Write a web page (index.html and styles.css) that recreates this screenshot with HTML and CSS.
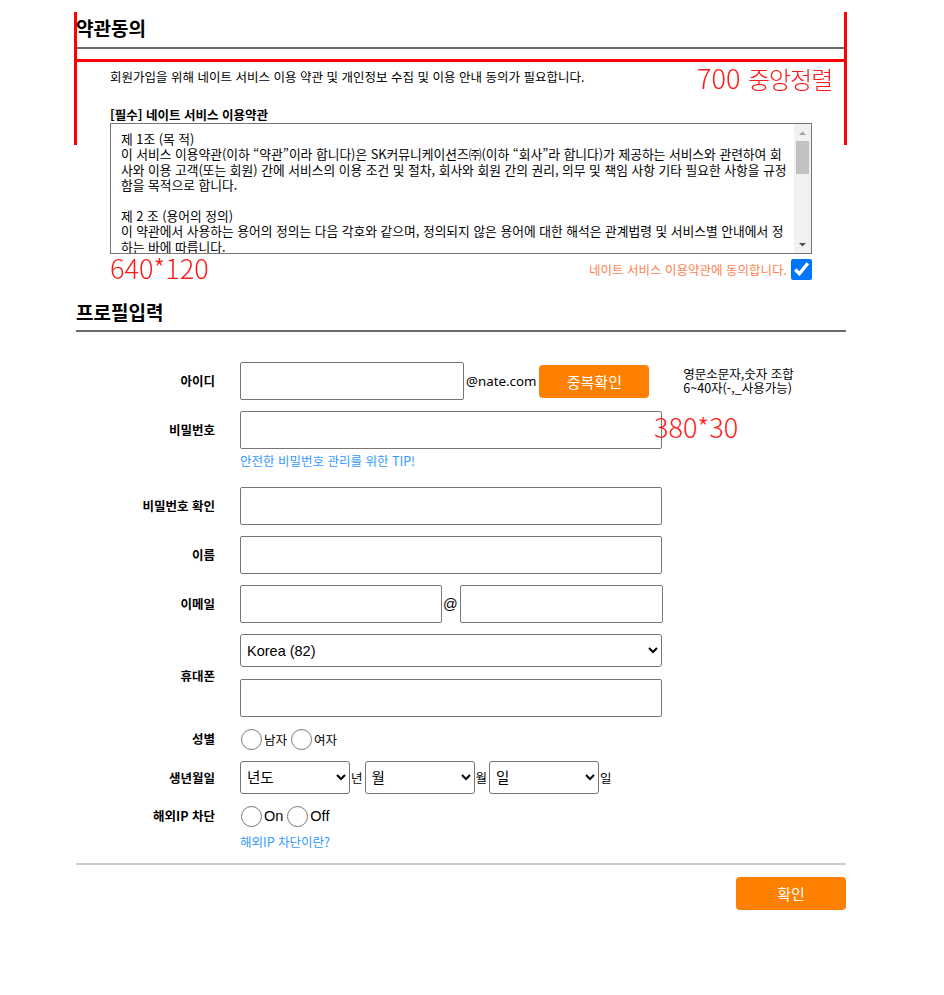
FILE: index.html
```html
<!DOCTYPE html>
<html lang="ko">
<head>
<meta charset="utf-8">
<title>회원가입</title>
<link rel="stylesheet" href="styles.css">
</head>
<body>
<div class="wrap">
  <section class="terms">
    <h2 class="sec-title">약관동의</h2>
    <p class="intro">회원가입을 위해 네이트 서비스 이용 약관 및 개인정보 수집 및 이용 안내 동의가 필요합니다.</p>
    <h3 class="req-title">[필수] 네이트 서비스 이용약관</h3>
    <div class="terms-area">
      <textarea class="terms-box" readonly>제 1조 (목 적)
이 서비스 이용약관(이하 “약관”이라 합니다)은 SK커뮤니케이션즈㈜(이하 “회사”라 합니다)가 제공하는 서비스와 관련하여 회사와 이용 고객(또는 회원) 간에 서비스의 이용 조건 및 절차, 회사와 회원 간의 권리, 의무 및 책임 사항 기타 필요한 사항을 규정함을 목적으로 합니다.

제 2 조 (용어의 정의)
이 약관에서 사용하는 용어의 정의는 다음 각호와 같으며, 정의되지 않은 용어에 대한 해석은 관계법령 및 서비스별 안내에서 정하는 바에 따릅니다.
1. “서비스”라 함은 구현되는 단말기(PC, 휴대형단말기 등의 각종 유무선 장치를 포함)와 상관없이 회원이 이용할 수 있는 네이트 및 관련 제반 서비스를 의미합니다.
2. “회원”이라 함은 회사의 서비스에 접속하여 이 약관에 따라 회사와 이용계약을 체결하고 회사가 제공하는 서비스를 이용하는 고객을 말합니다.
3. “아이디(ID)”라 함은 회원의 식별과 서비스 이용을 위하여 회원이 정하고 회사가 승인하는 문자와 숫자의 조합을 의미합니다.
4. “비밀번호”라 함은 회원이 부여 받은 아이디와 일치되는 회원임을 확인하고 비밀보호를 위해 회원 자신이 정한 문자 또는 숫자의 조합을 의미합니다.

제 3 조 (약관의 게시와 개정)
1. 회사는 이 약관의 내용을 회원이 쉽게 알 수 있도록 서비스 초기 화면에 게시합니다.
2. 회사는 관련법을 위배하지 않는 범위에서 이 약관을 개정할 수 있습니다.
3. 회사가 약관을 개정할 경우에는 적용일자 및 개정사유를 명시하여 현행약관과 함께 개정약관의 적용일자 7일 전부터 적용일자 전일까지 공지합니다.

제 4 조 (이용계약 체결)
1. 이용계약은 회원이 되고자 하는 자가 약관의 내용에 대하여 동의를 한 다음 회원가입신청을 하고 회사가 이러한 신청에 대하여 승낙함으로써 체결됩니다.
2. 회사는 가입신청자의 신청에 대하여 서비스 이용을 승낙함을 원칙으로 합니다.</textarea>
      <div class="fake-scroll" aria-hidden="true">
        <svg class="sb-btn" width="17" height="17" viewBox="0 0 17 17"><polygon points="5,11 12,11 8.5,7.5" fill="#a3a3a3"/></svg>
        <div class="sb-track"><div class="sb-thumb"></div></div>
        <svg class="sb-btn" width="17" height="17" viewBox="0 0 17 17"><polygon points="5,7 12,7 8.5,10.5" fill="#505050"/></svg>
      </div>
    </div>
    <div class="agree">
      <label for="agree1" class="agree-text">네이트 서비스 이용약관에 동의합니다.</label>
      <input type="checkbox" id="agree1" class="agree-check" checked>
    </div>
  </section>

  <section class="profile">
    <h2 class="sec-title sec-title-profile">프로필입력</h2>
    <div class="form">
      <label class="lbl" for="uid">아이디</label>
      <div class="field">
        <input class="inp inp-id" id="uid" type="text">
        <span class="suffix">@nate.com</span>
        <button class="btn btn-check" type="button">중복확인</button>
        <p class="hint">영문소문자,숫자 조합<br>6~40자(-,_사용가능)</p>
      </div>

      <label class="lbl lbl-top" for="pw">비밀번호</label>
      <div class="field field-col">
        <input class="inp inp-wide" id="pw" type="password">
        <a class="link tip" href="#">안전한 비밀번호 관리를 위한 TIP!</a>
      </div>

      <label class="lbl" for="pw2">비밀번호 확인</label>
      <div class="field">
        <input class="inp inp-wide" id="pw2" type="password">
      </div>

      <label class="lbl" for="uname">이름</label>
      <div class="field">
        <input class="inp inp-wide" id="uname" type="text">
      </div>

      <label class="lbl" for="mail1">이메일</label>
      <div class="field">
        <input class="inp inp-email" id="mail1" type="text"><span class="at">@</span><input class="inp inp-email2" type="text">
      </div>

      <label class="lbl" for="country">휴대폰</label>
      <div class="field field-col field-phone">
        <select class="sel sel-phone" id="country">
          <option>Korea (82)</option>
          <option>Japan (81)</option>
          <option>USA (1)</option>
        </select>
        <input class="inp inp-wide" type="text">
      </div>

      <span class="lbl">성별</span>
      <div class="field">
        <div class="radio-group">
          <label class="opt"><input class="radio" type="radio" name="gender">남자</label>
          <label class="opt"><input class="radio" type="radio" name="gender">여자</label>
        </div>
      </div>

      <span class="lbl">생년월일</span>
      <div class="field">
        <select class="sel sel-birth"><option>년도</option></select><span class="unit">년</span>
        <select class="sel sel-birth"><option>월</option></select><span class="unit">월</span>
        <select class="sel sel-birth"><option>일</option></select><span class="unit">일</span>
      </div>

      <span class="lbl lbl-top-sm">해외IP 차단</span>
      <div class="field field-col">
        <div class="radio-group">
          <label class="opt opt-en"><input class="radio" type="radio" name="ipblock">On</label>
          <label class="opt opt-en"><input class="radio" type="radio" name="ipblock">Off</label>
        </div>
        <a class="link ip-link" href="#">해외IP 차단이란?</a>
      </div>
    </div>

    <div class="divider"></div>
    <div class="actions">
      <button class="btn btn-submit" type="submit">확인</button>
    </div>
  </section>
</div>

<div class="frame"></div>
<span class="note note-700">700 <span class="note-ko">중앙정렬</span></span>
<span class="note note-640">640*120</span>
<span class="note note-380">380*30</span>
</body>
</html>
```

FILE: styles.css
```css
* {
  box-sizing: border-box;
}

body {
  margin: 0;
  position: relative;
  background: #fff;
  color: #000;
  font-family: "Noto Sans CJK KR", "Noto Sans", sans-serif;
  font-size: 12.5px;
}

.wrap {
  width: 770px;
  margin-left: 76px;
  padding-bottom: 80px;
}

.sec-title {
  margin: 0;
  padding: 16px 0 7px;
  font-size: 19px;
  line-height: 24px;
  font-weight: 700;
  border-bottom: 2px solid #6b6b6b;
}

.intro {
  margin: 19px 0 0 34px;
  line-height: 18px;
}

.req-title {
  margin: 20px 0 0 34px;
  font-size: 12.5px;
  line-height: 17px;
  font-weight: 700;
}

.terms-area {
  position: relative;
  width: 702px;
  margin-left: 34px;
}

.terms-box {
  display: block;
  width: 702px;
  height: 131px;
  margin: 0;
  border: 1px solid #767676;
  border-radius: 0;
  padding: 7px 22px 7px 10px;
  font-family: "Noto Sans CJK KR", sans-serif;
  font-size: 12.75px;
  line-height: 15.4px;
  color: #000;
  resize: none;
  overflow-y: scroll;
  scrollbar-width: none;
}

.fake-scroll {
  position: absolute;
  top: 1px;
  right: 1px;
  bottom: 1px;
  width: 17px;
  display: flex;
  flex-direction: column;
  background: #f1f1f1;
  pointer-events: none;
}

.sb-btn {
  display: block;
  flex: none;
}

.sb-track {
  flex: 1;
  position: relative;
}

.sb-thumb {
  position: absolute;
  top: 0;
  left: 2px;
  width: 13px;
  height: 33px;
  background: #c1c1c1;
}

.agree {
  display: flex;
  justify-content: flex-end;
  align-items: center;
  gap: 4px;
  width: 702px;
  margin: 5px 0 0 34px;
}

.agree-text {
  color: #ff7f50;
  line-height: 21px;
}

.agree-check {
  width: 21px;
  height: 21px;
  margin: 0;
  accent-color: #0075ff;
}

.sec-title-profile {
  margin-top: 20px;
  padding-top: 0;
  padding-bottom: 6px;
}

.form {
  display: grid;
  grid-template-columns: 139px 1fr;
  column-gap: 25px;
  row-gap: 11px;
  margin-top: 30px;
}

.lbl {
  text-align: right;
  font-weight: 700;
  font-size: 12.5px;
  line-height: 18px;
  align-self: center;
}

.lbl-top {
  align-self: start;
  line-height: 38px;
}

.lbl-top-sm {
  align-self: start;
  line-height: 22px;
}

.field {
  display: flex;
  align-items: center;
}

.field-col {
  flex-direction: column;
  align-items: flex-start;
}

.field-phone {
  gap: 12px;
}

.inp {
  height: 38px;
  margin: 0;
  padding: 0 6px;
  border: 1px solid #767676;
  border-radius: 2px;
  background: #fff;
  font-size: 13px;
}

.inp-id {
  width: 224px;
}

.inp-wide {
  width: 422px;
}

.inp-email {
  width: 202px;
}

.inp-email2 {
  width: 203px;
}

.suffix {
  margin-left: 2px;
  font-family: "Noto Sans", sans-serif;
  font-size: 13.3px;
}

.at {
  margin: 0 2px 0 1px;
  font-family: "Liberation Sans", Arial, sans-serif;
  font-size: 14.5px;
}

.btn {
  height: 33px;
  width: 110px;
  padding: 0;
  border: 0;
  border-radius: 4px;
  background: #ff8000;
  color: #fff;
  font-family: "Noto Sans CJK KR", sans-serif;
  font-size: 15px;
  cursor: pointer;
}

.btn-check {
  margin-left: 3px;
}

.hint {
  margin: 0 0 0 34px;
  font-size: 12.5px;
  line-height: 14px;
}

.link {
  color: #3399ff;
  text-decoration: none;
  font-size: 12.5px;
  line-height: 16px;
}

.tip {
  margin: 4px 0 7px;
}

.ip-link {
  margin-top: 7px;
}

.sel {
  height: 33px;
  margin: 0;
  padding: 0 2px;
  border: 1px solid #767676;
  border-radius: 3px;
  background: #fff;
  color: #000;
  font-family: "Liberation Sans", Arial, "Noto Sans CJK KR", sans-serif;
  font-size: 14.5px;
}

.sel-phone {
  width: 422px;
}

.sel-birth {
  width: 110px;
}

.unit {
  margin: 0 2px 0 1px;
  font-size: 12.5px;
}

.radio-group {
  display: flex;
  align-items: center;
  height: 22px;
}

.opt {
  display: flex;
  align-items: center;
  font-size: 12.5px;
}

.opt + .opt {
  margin-left: 3px;
}

.opt-en {
  font-family: "Liberation Sans", Arial, sans-serif;
  font-size: 14.5px;
}

.radio {
  width: 21px;
  height: 21px;
  margin: 0 2px 0 1px;
}

.divider {
  height: 2px;
  margin-top: 13px;
  background: #cccccc;
}

.actions {
  display: flex;
  justify-content: flex-end;
  margin-top: 12px;
}

/* design annotations overlaid on the page */
.frame {
  position: absolute;
  left: 74px;
  top: 12px;
  width: 773px;
  height: 133px;
  border-left: 3px solid #ff0000;
  border-right: 3px solid #ff0000;
}

.frame::after {
  content: "";
  position: absolute;
  left: -3px;
  right: -3px;
  top: 47px;
  height: 3px;
  background: #ff0000;
}

.note {
  position: absolute;
  color: #ff1a1a;
  font-family: "Noto Sans CJK KR", sans-serif;
  font-weight: 300;
  font-size: 27px;
  line-height: 30px;
  white-space: nowrap;
}

.note-ko {
  font-size: 24px;
  letter-spacing: -1px;
}

.note-700 {
  left: 697px;
  top: 63px;
}

.note-640 {
  left: 110px;
  top: 253px;
}

.note-380 {
  left: 654px;
  top: 412px;
}
```
